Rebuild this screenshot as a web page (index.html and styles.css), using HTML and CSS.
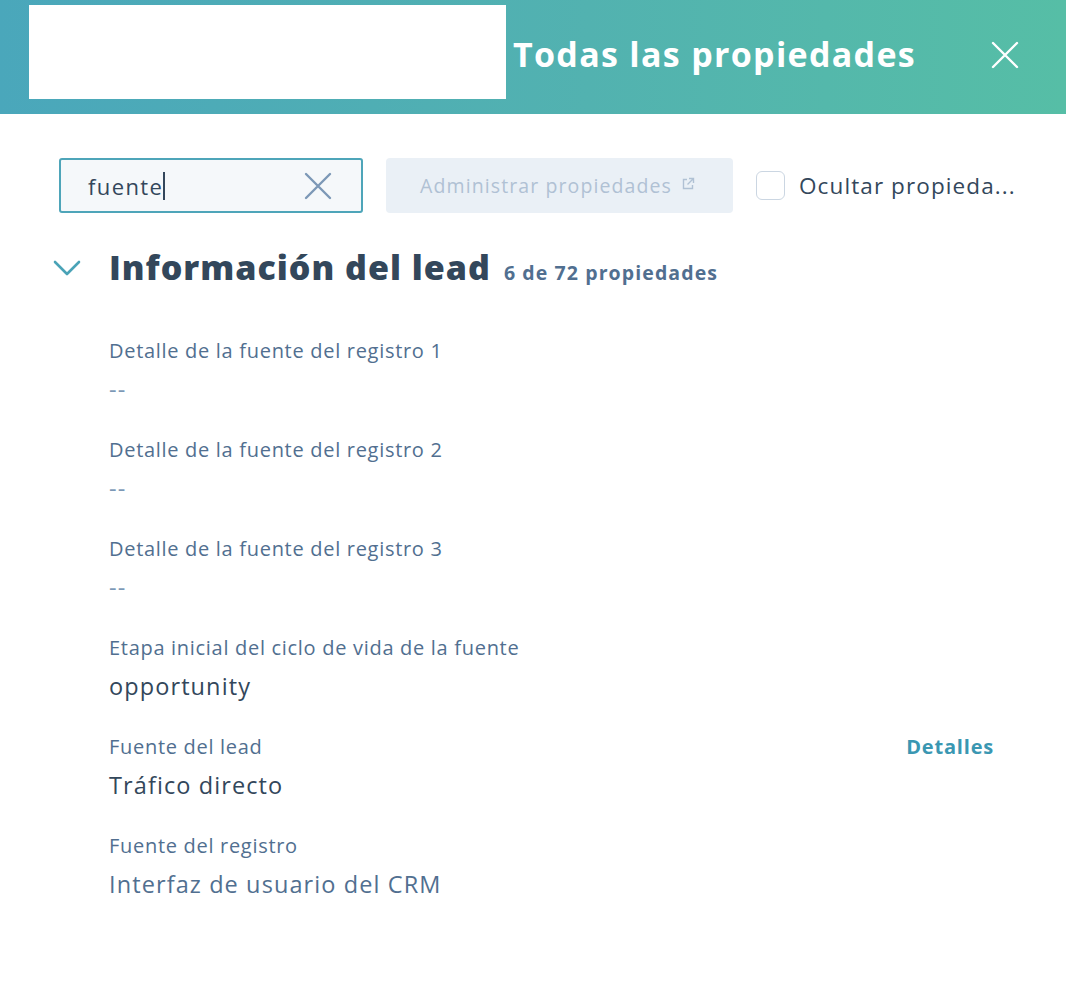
FILE: index.html
```html
<!DOCTYPE html>
<html lang="es">
<head>
<meta charset="utf-8">
<title>Todas las propiedades</title>
<link rel="stylesheet" href="styles.css">
</head>
<body>
<header class="header">
  <div class="header-blank"></div>
  <h1 class="header-title">Todas las propiedades</h1>
  <button class="close-btn" aria-label="Cerrar">
    <svg width="28" height="28" viewBox="0 0 28 28"><path d="M2 2 L26 26 M26 2 L2 26" stroke="#fff" stroke-width="2.4" stroke-linecap="round"/></svg>
  </button>
</header>
<main class="content">
  <div class="toolbar">
    <div class="search">
      <span class="search-text">fuente</span><span class="caret"></span>
      <svg class="search-clear" width="28" height="28" viewBox="0 0 28 28"><path d="M2 2 L26 26 M26 2 L2 26" stroke="#7c98b6" stroke-width="2.4" stroke-linecap="round"/></svg>
    </div>
    <button class="manage-btn">Administrar propiedades
      <svg width="14" height="14" viewBox="0 0 14 14"><path d="M6 2.5H2.5v9h9V8" fill="none" stroke="#b0c1d4" stroke-width="1.4"/><path d="M8 1.5h4.5V6 M12.5 1.5 L6.5 7.5" fill="none" stroke="#b0c1d4" stroke-width="1.4"/></svg>
    </button>
    <label class="hide-check"><span class="checkbox"></span><span class="hide-text">Ocultar propieda...</span></label>
  </div>

  <section class="group">
    <div class="group-head">
      <svg class="chevron" width="28" height="18" viewBox="0 0 28 18"><path d="M2 3 L14 15 L26 3" fill="none" stroke="#4aa3b7" stroke-width="2.6" stroke-linecap="round" stroke-linejoin="round"/></svg>
      <h2 class="group-title">Información del lead</h2>
      <span class="group-count">6 de 72 propiedades</span>
    </div>
    <div class="props">
      <div class="prop">
        <div class="prop-label">Detalle de la fuente del registro 1</div>
        <div class="prop-value empty">--</div>
      </div>
      <div class="prop">
        <div class="prop-label">Detalle de la fuente del registro 2</div>
        <div class="prop-value empty">--</div>
      </div>
      <div class="prop">
        <div class="prop-label">Detalle de la fuente del registro 3</div>
        <div class="prop-value empty">--</div>
      </div>
      <div class="prop">
        <div class="prop-label">Etapa inicial del ciclo de vida de la fuente</div>
        <div class="prop-value">opportunity</div>
      </div>
      <div class="prop">
        <div class="prop-row">
          <div class="prop-label">Fuente del lead</div>
          <a class="details-link">Detalles</a>
        </div>
        <div class="prop-value">Tráfico directo</div>
      </div>
      <div class="prop">
        <div class="prop-label">Fuente del registro</div>
        <div class="prop-value muted">Interfaz de usuario del CRM</div>
      </div>
    </div>
  </section>
</main>
</body>
</html>
```

FILE: styles.css
```css
* { box-sizing: border-box; }
html, body { margin: 0; padding: 0; background: #fff; }
body {
  font-family: "Open Sans", "Liberation Sans", sans-serif;
  color: #33475b;
  width: 1066px;
}
.header {
  height: 114px;
  background: linear-gradient(90deg, #4aa7bb 0%, #52b2b0 55%, #56bea6 100%);
  display: flex;
  align-items: flex-start;
  padding: 5px 0 0 29px;
}
.header-blank {
  width: 477px;
  height: 94px;
  background: #fff;
  flex: none;
}
.header-title {
  margin: 0 0 0 7px;
  padding-top: 25px;
  font-size: 34px;
  font-weight: 700;
  color: #fff;
  letter-spacing: 1.3px;
  line-height: 48px;
  width: 477px;
  white-space: nowrap;
}
.close-btn {
  margin: 36px 0 0 1px;
  border: 0;
  background: none;
  padding: 0;
  width: 28px;
  height: 28px;
  display: flex;
}
.content { padding: 44px 0 0 59px; }
.toolbar {
  display: flex;
  align-items: center;
}
.search {
  width: 304px;
  height: 55px;
  border: 2px solid #4ea5b9;
  border-radius: 3px;
  background: #f5f8fa;
  display: flex;
  align-items: center;
  padding-left: 27px;
  position: relative;
}
.search-text { font-size: 22px; color: #33475b; letter-spacing: 1.4px; }
.caret { width: 1.5px; height: 28px; background: #33475b; margin-left: 0; }
.search-clear { position: absolute; right: 29px; top: 12px; }
.manage-btn {
  margin-left: 23px;
  width: 347px;
  height: 55px;
  border: 0;
  border-radius: 4px;
  background: #eaf0f6;
  color: #b0c1d4;
  font-family: inherit;
  font-size: 19.5px;
  letter-spacing: 1.1px;
  display: flex;
  align-items: center;
  justify-content: center;
  gap: 9px;
  padding-left: 2px;
}
.manage-btn svg { margin-bottom: 4px; }
.hide-check {
  margin-left: 23px;
  display: flex;
  align-items: center;
}
.checkbox {
  width: 29px;
  height: 29px;
  border: 1.5px solid #cbd6e2;
  border-radius: 6px;
  background: #fff;
}
.hide-text {
  margin-left: 14px;
  font-size: 22.5px;
  letter-spacing: 1.1px;
  color: #33475b;
  white-space: nowrap;
}
.group { margin-top: 30px; }
.group-head {
  display: flex;
  align-items: baseline;
  margin-left: -6px;
}
.chevron { flex: none; align-self: center; margin-top: 2px; }
.group-title {
  margin: 0 0 0 28px;
  font-size: 34px;
  font-weight: 800;
  letter-spacing: 1px;
  color: #33475b;
  line-height: 48px;
}
.group-count {
  margin-left: 13px;
  font-size: 19.5px;
  font-weight: 700;
  letter-spacing: 1.1px;
  color: #516f90;
}
.props {
  margin: 45px 0 0 50px;
  width: 885px;
  display: flex;
  flex-direction: column;
  gap: 31px;
}
.prop { display: flex; flex-direction: column; gap: 8px; }
.prop-row { display: flex; justify-content: space-between; align-items: baseline; }
.prop-label {
  font-size: 20px;
  letter-spacing: 0.7px;
  color: #516f90;
  line-height: 30px;
}
.prop-value {
  font-size: 23.5px;
  letter-spacing: 1.1px;
  color: #33475b;
  line-height: 30px;
}
.prop-value.empty { color: #7c98b6; }
.prop-value.muted { color: #516f90; }
.details-link {
  font-size: 20px;
  font-weight: 700;
  letter-spacing: 0.8px;
  color: #3a97b2;
  cursor: pointer;
}
```
